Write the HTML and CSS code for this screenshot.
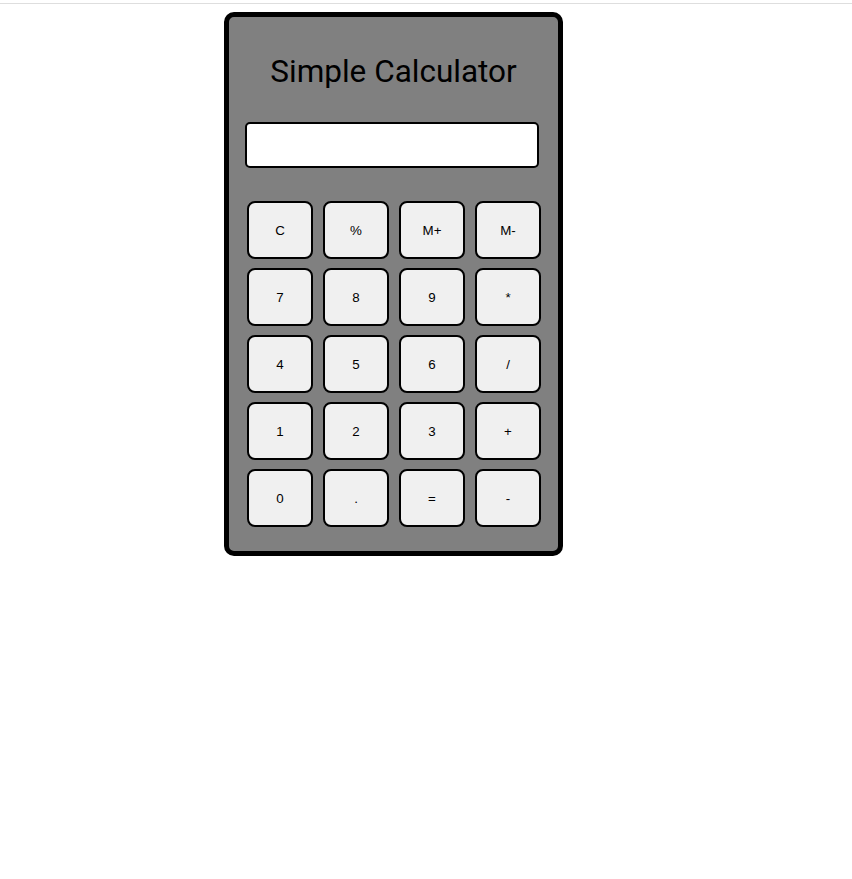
FILE: index.html
```html
<!DOCTYPE html>
<html>
<head>
<meta charset="utf-8">
<title>Simple Calculator</title>
<link rel="stylesheet" href="styles.css">
</head>
<body>
<div class="topline"></div>
<div class="calculator">
  <h1 class="title">Simple Calculator</h1>
  <div class="display"></div>
  <div class="keys">
    <button class="key">C</button>
    <button class="key">%</button>
    <button class="key">M+</button>
    <button class="key">M-</button>
    <button class="key">7</button>
    <button class="key">8</button>
    <button class="key">9</button>
    <button class="key">*</button>
    <button class="key">4</button>
    <button class="key">5</button>
    <button class="key">6</button>
    <button class="key">/</button>
    <button class="key">1</button>
    <button class="key">2</button>
    <button class="key">3</button>
    <button class="key">+</button>
    <button class="key">0</button>
    <button class="key">.</button>
    <button class="key">=</button>
    <button class="key">-</button>
  </div>
</div>
</body>
</html>
```
FILE: styles.css
```css
html, body {
  margin: 0;
  padding: 0;
  background: #ffffff;
}
.topline {
  margin-top: 3px;
  height: 1px;
  background: #dedede;
}
.calculator {
  box-sizing: border-box;
  width: 339px;
  height: 544px;
  margin: 8px 0 0 224px;
  border: 5px solid #000;
  border-radius: 10px;
  background: #808080;
  padding: 36px 0 0 0;
}
.title {
  margin: 0;
  height: 38px;
  line-height: 38px;
  text-align: center;
  font-family: Roboto, "Liberation Sans", sans-serif;
  font-weight: 400;
  font-size: 31.5px;
  color: #000;
}
.display {
  box-sizing: border-box;
  width: 294px;
  height: 46px;
  margin: 31px 0 0 16px;
  background: #fff;
  border: 2px solid #000;
  border-radius: 5px;
}
.keys {
  display: grid;
  grid-template-columns: repeat(4, 66px);
  grid-auto-rows: 58px;
  column-gap: 10px;
  row-gap: 9px;
  margin: 33px 0 0 18px;
}
.key {
  box-sizing: border-box;
  margin: 0;
  padding: 0;
  background: #f0f0f0;
  border: 2px solid #000;
  border-radius: 8px;
  font-family: "Liberation Sans", Arial, sans-serif;
  font-size: 13.333px;
  color: #000;
}
```
